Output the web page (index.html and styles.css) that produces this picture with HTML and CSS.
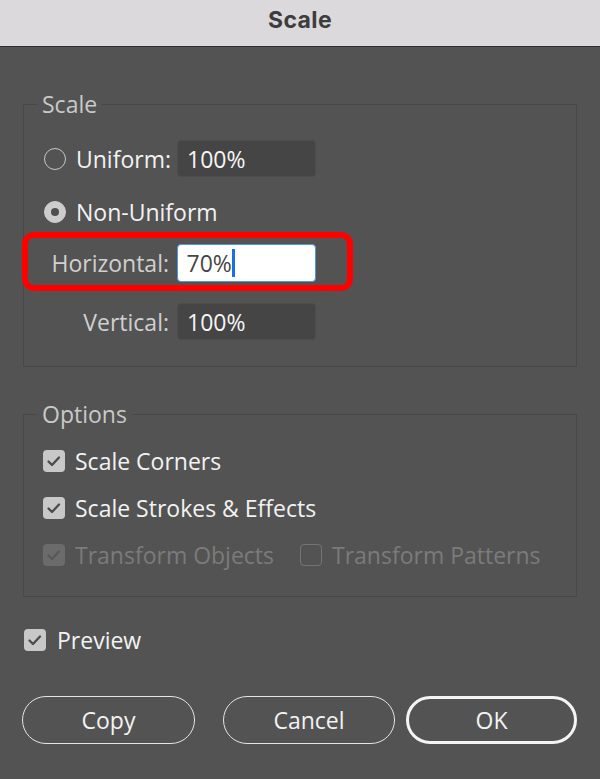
FILE: index.html
```html
<!DOCTYPE html>
<html lang="en">
<head>
<meta charset="utf-8">
<title>Scale</title>
<link rel="stylesheet" href="styles.css">
</head>
<body>
<div class="dialog">
  <header class="titlebar">Scale</header>
  <main class="content">
    <fieldset class="group group-scale">
      <legend>Scale</legend>
      <div class="radio-row">
        <span class="radio"></span>
        <span class="radio-label fixed">Uniform:</span>
        <div class="field">100%</div>
      </div>
      <div class="radio-row second">
        <span class="radio checked"></span>
        <span class="radio-label">Non-Uniform</span>
      </div>
      <div class="field-row highlight">
        <span class="field-label">Horizontal:</span>
        <div class="field active">70%<span class="caret"></span></div>
      </div>
      <div class="field-row vertical">
        <span class="field-label">Vertical:</span>
        <div class="field">100%</div>
      </div>
    </fieldset>

    <fieldset class="group group-options">
      <legend>Options</legend>
      <div class="check-row">
        <span class="check on"><svg viewBox="0 0 22 22"><polyline points="5.5,11.5 9,15 16,7.5"/></svg></span>
        <span class="check-label">Scale Corners</span>
      </div>
      <div class="check-row">
        <span class="check on"><svg viewBox="0 0 22 22"><polyline points="5.5,11.5 9,15 16,7.5"/></svg></span>
        <span class="check-label">Scale Strokes &amp; Effects</span>
      </div>
      <div class="check-row disabled">
        <div class="check-item first">
          <span class="check on"><svg viewBox="0 0 22 22"><polyline points="5.5,11.5 9,15 16,7.5"/></svg></span>
          <span class="check-label">Transform Objects</span>
        </div>
        <div class="check-item">
          <span class="check off"></span>
          <span class="check-label">Transform Patterns</span>
        </div>
      </div>
    </fieldset>

    <div class="preview">
      <span class="check on"><svg viewBox="0 0 22 22"><polyline points="5.5,11.5 9,15 16,7.5"/></svg></span>
      <span class="check-label">Preview</span>
    </div>

    <div class="buttons">
      <button class="btn copy">Copy</button>
      <button class="btn cancel">Cancel</button>
      <button class="btn ok">OK</button>
    </div>
  </main>
</div>
</body>
</html>
```
FILE: styles.css
```css
* { box-sizing: border-box; }

html, body {
  margin: 0;
  height: 100%;
  background: #535353;
}

body {
  font-family: "Open Sans", "Liberation Sans", sans-serif;
  font-size: 23px;
  font-weight: 500;
  color: #f2f2f2;
}

.titlebar {
  height: 47px;
  background: #dbd9dc;
  border-bottom: 1px solid #2f2f2f;
  color: #3d3d3d;
  font-family: Inter, "Liberation Sans", sans-serif;
  font-weight: 700;
  font-size: 23px;
  letter-spacing: 0.4px;
  display: flex;
  align-items: center;
  justify-content: center;
  padding-bottom: 7px;
}

.group {
  margin: 44px 23px 0;
  padding: 0;
  border: 1px solid #484848;
  min-width: 0;
}

.group legend {
  margin-left: 13px;
  padding: 0 5px;
  font-size: 23px;
  line-height: 26px;
  color: #c9c9c9;
}

.group-scale {
  padding-top: 23px;
  padding-bottom: 26px;
}

.radio-row {
  display: flex;
  align-items: center;
  height: 37px;
  padding-left: 20px;
}

.radio-row.second {
  margin-top: 17px;
  height: 36px;
}

.radio {
  flex: none;
  width: 22px;
  height: 22px;
  border-radius: 50%;
  border: 1.5px solid #c6c6c6;
  margin-right: 10px;
  display: flex;
  align-items: center;
  justify-content: center;
}

.radio.checked {
  background: #cdcdcd;
  border-color: #cdcdcd;
}

.radio.checked::after {
  content: "";
  width: 8px;
  height: 8px;
  border-radius: 50%;
  background: #4e4e4e;
}

.radio-label.fixed {
  width: 101px;
  flex: none;
}

.field-row {
  display: flex;
  align-items: center;
}

.field-label {
  flex: none;
  width: 145px;
  margin-right: 8px;
  text-align: right;
  color: #d0d0d0;
}

.highlight {
  margin-top: 2px;
  margin-left: -2px;
  width: 331px;
  border: 6px solid #ff0000;
  border-radius: 12px;
  padding: 6px 0 3px;
}

.highlight .field-label {
  width: 141px;
}

.vertical {
  margin-top: 12px;
}

.field {
  flex: none;
  width: 139px;
  height: 37px;
  background: #454545;
  border: 1px solid #4d4d4d;
  border-radius: 4px;
  padding-left: 9px;
  display: flex;
  align-items: center;
  color: #f5f5f5;
}

.field.active {
  height: 38px;
  background: #ffffff;
  border: 1.5px solid #4d97ea;
  color: #464646;
  padding-left: 8.5px;
}

.caret {
  width: 3px;
  height: 28px;
  background: #1a6ee8;
}

.group-options {
  margin-top: 34px;
  padding: 23px 0 30px 0;
}

.check-row {
  display: flex;
  align-items: center;
  height: 22px;
  margin-bottom: 25px;
  padding-left: 19px;
}

.check-row:last-child {
  margin-bottom: 0;
}

.check-item {
  display: flex;
  align-items: center;
}

.check-item.first {
  width: 257px;
  flex: none;
}

.check {
  flex: none;
  width: 22px;
  height: 22px;
  border-radius: 4px;
  margin-right: 10px;
  display: flex;
}

.check svg {
  width: 22px;
  height: 22px;
}

.check polyline {
  fill: none;
  stroke: #4b4b4b;
  stroke-width: 2.3;
  stroke-linecap: round;
  stroke-linejoin: round;
}

.check.on {
  background: #c8c8c8;
}

.check.off {
  border: 1.5px solid #747474;
}

.disabled .check.on {
  background: #6b6b6b;
}

.disabled .check polyline {
  stroke: #585858;
}

.disabled .check-label {
  color: #7b7b7b;
}

.preview {
  display: flex;
  align-items: center;
  height: 22px;
  margin: 32px 0 0 24px;
}

.preview .check {
  margin-right: 11px;
}

.buttons {
  display: flex;
  margin-top: 45px;
  padding-left: 22px;
}

.btn {
  height: 48px;
  border-radius: 24px;
  background: transparent;
  border: 1.5px solid #e4e4e4;
  color: #f2f2f2;
  font-family: "Open Sans", "Liberation Sans", sans-serif;
  font-size: 23px;
  font-weight: 500;
  padding: 0;
  display: flex;
  align-items: center;
  justify-content: center;
}

.copy { width: 173px; }
.cancel { width: 172px; margin-left: 28px; }
.ok { width: 171px; margin-left: 11px; border: 3px solid #f4f4f4; }
```
